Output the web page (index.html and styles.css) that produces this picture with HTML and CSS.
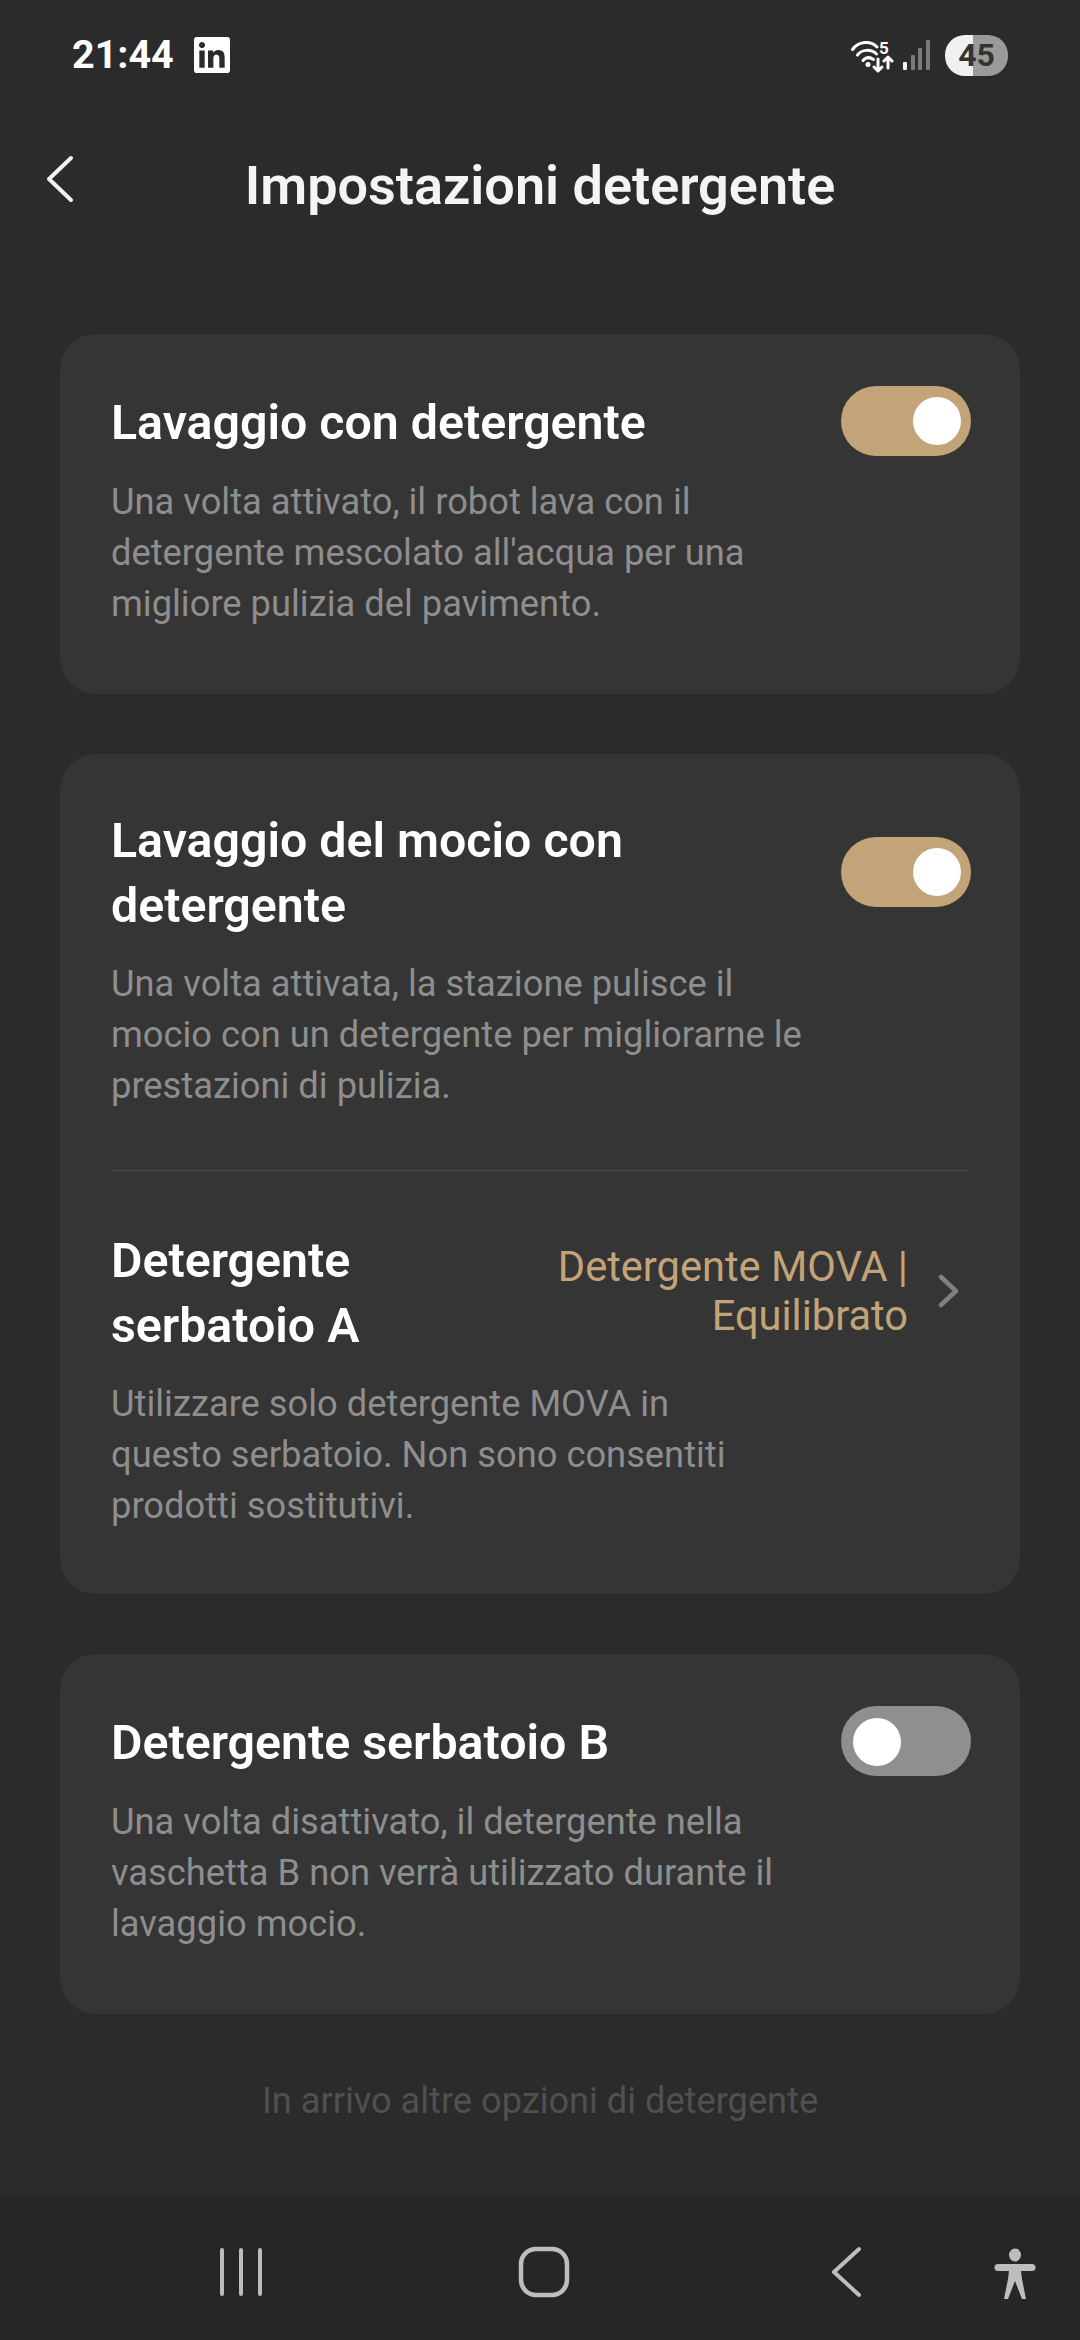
FILE: index.html
```html
<!DOCTYPE html>
<html lang="it">

<head>
  <meta charset="UTF-8">
  <title>Impostazioni detergente</title>
  <link rel="stylesheet" href="styles.css">
</head>

<body>
  <!-- status bar -->
  <div class="status">
    <div class="status-left">
      <span class="time">21:44</span>
      <svg class="linkedin" viewBox="0 0 24 24">
        <path fill="#fff" d="M20.447 20.452h-3.554v-5.569c0-1.328-.027-3.037-1.852-3.037-1.853 0-2.136 1.445-2.136 2.939v5.667H9.351V9h3.414v1.561h.046c.477-.9 1.637-1.85 3.37-1.85 3.601 0 4.267 2.37 4.267 5.455v6.286zM5.337 7.433c-1.144 0-2.063-.926-2.063-2.065 0-1.138.92-2.063 2.063-2.063 1.14 0 2.064.925 2.064 2.063 0 1.139-.925 2.065-2.064 2.065zm1.782 13.019H3.555V9h3.564v11.452zM22.225 0H1.771C.792 0 0 .774 0 1.729v20.542C0 23.227.792 24 1.771 24h20.451C23.2 24 24 23.227 24 22.271V1.729C24 .774 23.2 0 22.222 0h.003z" />
      </svg>
    </div>
    <div class="status-right">
      <div class="wifi">
        <svg viewBox="0 0 44 36" width="44" height="36">
          <g fill="none" stroke="#fff" stroke-width="3" stroke-linecap="round" stroke-linejoin="round">
            <path d="M2.500 11.500C9 2.500 21 2.500 27 9" />
            <path d="M7.500 17C12 11 21 11 26.500 16" />
            <path d="M13 22.500C16 19 20 19 23.500 21.500" />
            <path d="M28 21v12M24 29l4 4 4-4" />
            <path d="M38 30V19M34 23l4-4 4 4" />
          </g>
          <circle cx="18" cy="26.500" r="2.500" fill="#fff" />
        </svg>
        <span class="wifi-num">5</span>
      </div>
      <svg class="signal" viewBox="0 0 28 30" width="28" height="30">
        <rect x="0" y="22" width="4" height="8" rx="1" fill="#f2f2f2" />
        <rect x="8" y="15" width="4" height="15" rx="1" fill="#7b7b7b" />
        <rect x="15" y="8" width="4" height="22" rx="1" fill="#7b7b7b" />
        <rect x="23" y="0" width="4" height="30" rx="1" fill="#7b7b7b" />
      </svg>
      <div class="battery">45</div>
    </div>
  </div>

  <!-- header -->
  <div class="header">
    <svg class="back" viewBox="0 0 28 48" width="28" height="48">
      <path d="M25 3L3 24l22 21" fill="none" stroke="#f2f2f2" stroke-width="4" stroke-linecap="round" stroke-linejoin="round" />
    </svg>
    <h1>Impostazioni detergente</h1>
  </div>

  <div class="content">
    <div class="card">
      <div class="row">
        <div class="title single">Lavaggio con detergente</div>
        <div class="switch on"><i></i></div>
      </div>
      <p class="desc">Una volta attivato, il robot lava con il detergente mescolato all'acqua per una migliore pulizia del pavimento.</p>
    </div>

    <div class="card">
      <div class="row">
        <div class="title">Lavaggio del mocio con detergente</div>
        <div class="switch on"><i></i></div>
      </div>
      <p class="desc">Una volta attivata, la stazione pulisce il mocio con un detergente per migliorarne le prestazioni di pulizia.</p>
      <div class="line"></div>
      <div class="row">
        <div class="title narrow">Detergente serbatoio A</div>
        <div class="pick">
          <span>Detergente MOVA | Equilibrato</span>
          <svg viewBox="0 0 22 34" width="22" height="34">
            <path d="M3 3l15 14L3 31" fill="none" stroke="#808080" stroke-width="4.500" stroke-linecap="round" stroke-linejoin="round" />
          </svg>
        </div>
      </div>
      <p class="desc short">Utilizzare solo detergente MOVA in questo serbatoio. Non sono consentiti prodotti sostitutivi.</p>
    </div>

    <div class="card">
      <div class="row">
        <div class="title single">Detergente serbatoio B</div>
        <div class="switch off"><i></i></div>
      </div>
      <p class="desc">Una volta disattivato, il detergente nella vaschetta B non verrà utilizzato durante il lavaggio mocio.</p>
    </div>

    <div class="more">In arrivo altre opzioni di detergente</div>
  </div>

  <!-- navigation bar -->
  <div class="nav">
    <svg viewBox="0 0 1080 144" width="1080" height="144" fill="none" stroke="#bdbdbd" stroke-linecap="round">
      <g stroke-width="4">
        <path d="M222 54v44M241 54v44M260 54v44" />
      </g>
      <rect x="521" y="53" width="46" height="46" rx="15" stroke-width="4.500" />
      <path d="M859 53l-25 23 25 23" stroke-width="4" stroke-linejoin="round" />
      <g fill="#bdbdbd" stroke="none">
        <ellipse cx="1015" cy="59" rx="6" ry="6.500" />
        <path d="M998 68h34a3.500 3.500 0 0 1 0 7h-11l1 8 4 20h-4l-7-18-7 18h-4l4-20 1-8h-11a3.500 3.500 0 0 1 0-7z" />
      </g>
    </svg>
  </div>
</body>

</html>
```

FILE: styles.css
```css
* {
  margin: 0;
  padding: 0;
  box-sizing: border-box;
}

body {
  width: 1080px;
  height: 2340px;
  display: flex;
  flex-direction: column;
  background: #2b2b2b;
  font-family: Roboto, "Noto Sans", sans-serif;
  overflow: hidden;
}

/* status bar */
.status {
  height: 110px;
  padding: 32px 72px 0 72px;
  display: flex;
  justify-content: space-between;
  align-items: flex-start;
}

.status-left {
  display: flex;
  align-items: center;
  gap: 20px;
}

.time {
  font-size: 39.500px;
  line-height: 46px;
  font-weight: 700;
  color: #fff;
}

.linkedin {
  width: 36px;
  height: 36px;
}

.status-right {
  display: flex;
  align-items: center;
  gap: 9px;
  height: 46px;
}

.wifi {
  position: relative;
  width: 44px;
  height: 36px;
  margin-top: 2px;
}

.wifi svg {
  display: block;
}

.wifi-num {
  position: absolute;
  left: 29px;
  top: 2px;
  font-size: 17px;
  line-height: 16px;
  font-weight: 700;
  color: #fff;
}

.battery {
  width: 63px;
  height: 41px;
  margin-left: 5px;
  border-radius: 20px;
  background: linear-gradient(90deg, #f0f0f0 44%, #9a9a9a 44%);
  color: #333;
  font-size: 32px;
  line-height: 41px;
  font-weight: 700;
  text-align: center;
}

/* header */
.header {
  height: 100px;
  padding-top: 37px;
  position: relative;
  text-align: center;
}

.header h1 {
  font-size: 54px;
  line-height: 78px;
  font-weight: 600;
  color: #f4f4f4;
}

.back {
  position: absolute;
  left: 46px;
  top: 45px;
}

/* cards */
.content {
  flex: 1;
  padding: 124px 60px 0;
}

.card {
  margin-bottom: 60px;
  padding: 52px 51px 65px;
  border-radius: 36px;
  background: #353535;
}

.row {
  display: flex;
  justify-content: space-between;
  align-items: center;
}

.title {
  max-width: 700px;
  padding-top: 2px;
  font-size: 48.300px;
  line-height: 65px;
  font-weight: 600;
  color: #fff;
}

.title.single {
  padding-top: 3px;
}

.title.narrow {
  max-width: 330px;
}

.switch {
  flex: none;
  width: 130px;
  height: 70px;
  margin-right: -2px;
  padding: 11px;
  border-radius: 35px;
}

.switch.on {
  padding-left: 72px;
  background: #c2a478;
}

.switch.off {
  padding: 12px;
  background: #8f8f8f;
}

.switch i {
  display: block;
  width: 48px;
  height: 48px;
  border-radius: 50%;
  background: #fff;
}

.desc {
  max-width: 710px;
  margin-top: 20px;
  font-size: 36.300px;
  line-height: 51px;
  color: #8e8e8e;
}

.desc.short {
  max-width: 640px;
  margin-bottom: -2px;
}

.line {
  height: 1px;
  margin: 59px 0 55px;
  background: #4e4e4e;
}

.pick {
  display: flex;
  align-items: center;
  gap: 30px;
  margin-right: 9px;
  padding-bottom: 3px;
  font-size: 41.600px;
  line-height: 49px;
  color: #c2a478;
  text-align: right;
}

.pick span {
  width: 380px;
}

.more {
  margin-top: 62px;
  text-align: center;
  font-size: 36.200px;
  line-height: 50px;
  color: #505050;
}

/* navigation bar */
.nav {
  height: 144px;
  background: #262626;
}

.nav svg {
  display: block;
}
```
